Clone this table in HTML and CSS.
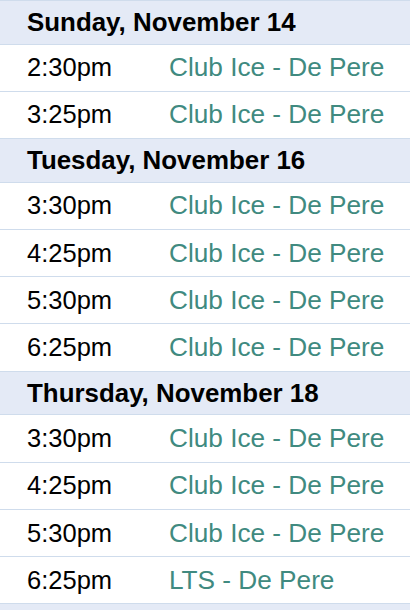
FILE: index.html
```html
<!DOCTYPE html>
<html>
<head>
<meta charset="utf-8">
<link rel="stylesheet" href="styles.css">
</head>
<body>
<div class="schedule">
  <div class="day">Sunday, November 14</div>
  <div class="slot"><span class="time">2:30pm</span><span class="place">Club Ice - De Pere</span></div>
  <div class="slot"><span class="time">3:25pm</span><span class="place">Club Ice - De Pere</span></div>
  <div class="day">Tuesday, November 16</div>
  <div class="slot"><span class="time">3:30pm</span><span class="place">Club Ice - De Pere</span></div>
  <div class="slot"><span class="time">4:25pm</span><span class="place">Club Ice - De Pere</span></div>
  <div class="slot"><span class="time">5:30pm</span><span class="place">Club Ice - De Pere</span></div>
  <div class="slot"><span class="time">6:25pm</span><span class="place">Club Ice - De Pere</span></div>
  <div class="day">Thursday, November 18</div>
  <div class="slot"><span class="time">3:30pm</span><span class="place">Club Ice - De Pere</span></div>
  <div class="slot"><span class="time">4:25pm</span><span class="place">Club Ice - De Pere</span></div>
  <div class="slot"><span class="time">5:30pm</span><span class="place">Club Ice - De Pere</span></div>
  <div class="slot"><span class="time">6:25pm</span><span class="place">LTS - De Pere</span></div>
</div>
</body>
</html>
```
FILE: styles.css
```css
html, body {
  margin: 0;
  padding: 0;
  background: #e4eaf6;
}
.schedule {
  font-family: "Liberation Sans", Arial, sans-serif;
  color: #000;
  border-top: 1px solid #cfdcec;
}
.day {
  display: flex;
  align-items: center;
  height: 42.5px;
  padding-left: 27px;
  background: #e4eaf6;
  border-bottom: 1px solid #cfdcec;
  font-weight: bold;
  font-size: 25.9px;
  white-space: nowrap;
}
.slot {
  display: flex;
  align-items: center;
  height: 46.3px;
  padding-left: 27px;
  background: #fff;
  border-bottom: 1px solid #cfdcec;
  font-size: 25.5px;
  white-space: nowrap;
}
.time {
  width: 142px;
  flex: none;
}
.place {
  color: #408a80;
  font-size: 26.2px;
}
```
